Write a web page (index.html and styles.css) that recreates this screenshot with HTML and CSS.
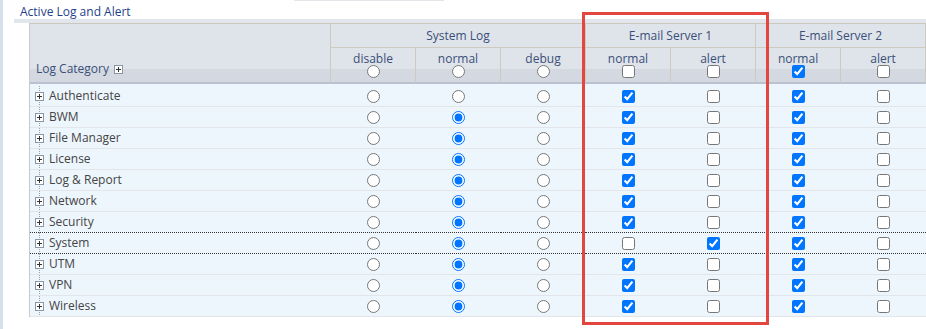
FILE: index.html
```html
<!DOCTYPE html>
<html lang="en">
<head>
    <meta charset="UTF-8">
    <meta name="viewport" content="width=device-width, initial-scale=1.0">
    <title>Active Log and Alert</title>
    <link rel="stylesheet" href="styles.css">
</head>
<body>

<div class="page">
    <div class="top-edge"></div>

    <div class="section">
        <div class="section-title">Active Log and Alert</div>

        <div class="section-body">
            <table class="log-table">
                <colgroup>
                    <col class="col-category">
                    <col span="7" class="col-option">
                </colgroup>
                <thead>
                    <tr class="group-row">
                        <th rowspan="2" class="category-head">
                            Log Category
                            <svg class="expander" width="9" height="9" viewBox="0 0 9 9"><rect x="0.5" y="0.5" width="8" height="8" fill="#fff" stroke="#8a96a4"/><path d="M2 4.5h5M4.5 2v5" stroke="#333"/></svg>
                        </th>
                        <th colspan="3">System Log</th>
                        <th colspan="2">E-mail Server 1</th>
                        <th colspan="2">E-mail Server 2</th>
                    </tr>
                    <tr class="option-row">
                        <th><div class="opt-label">disable</div><input type="radio" name="all"></th>
                        <th><div class="opt-label">normal</div><input type="radio" name="all"></th>
                        <th><div class="opt-label">debug</div><input type="radio" name="all"></th>
                        <th><div class="opt-label">normal</div><input type="checkbox"></th>
                        <th><div class="opt-label">alert</div><input type="checkbox"></th>
                        <th><div class="opt-label">normal</div><input type="checkbox" checked></th>
                        <th><div class="opt-label">alert</div><input type="checkbox"></th>
                    </tr>
                </thead>
                <tbody id="logRows"></tbody>
            </table>
        </div>
    </div>

    <div class="highlight"></div>
</div>

<script>
    // level: 0 none, 1 disable, 2 normal, 3 debug
    const categories = [
        { name: 'Authenticate', level: 0, mail: [1, 0, 1, 0] },
        { name: 'BWM', level: 2, mail: [1, 0, 1, 0] },
        { name: 'File Manager', level: 2, mail: [1, 0, 1, 0] },
        { name: 'License', level: 2, mail: [1, 0, 1, 0] },
        { name: 'Log & Report', level: 2, mail: [1, 0, 1, 0] },
        { name: 'Network', level: 2, mail: [1, 0, 1, 0] },
        { name: 'Security', level: 2, mail: [1, 0, 1, 0], sep: true },
        { name: 'System', level: 2, mail: [0, 1, 1, 0], sep: true },
        { name: 'UTM', level: 2, mail: [1, 0, 1, 0] },
        { name: 'VPN', level: 2, mail: [1, 0, 1, 0] },
        { name: 'Wireless', level: 2, mail: [1, 0, 1, 0] }
    ];

    const expander = '<svg class="expander" width="9" height="9" viewBox="0 0 9 9"><rect x="0.5" y="0.5" width="8" height="8" fill="#fff" stroke="#8a96a4"/><path d="M2 4.5h5M4.5 2v5" stroke="#333"/></svg>';
    const tbody = document.getElementById('logRows');

    categories.forEach((cat, i) => {
        const tr = document.createElement('tr');
        if (cat.sep) tr.className = 'dotted';

        let html = `<td class="category">${expander}${cat.name.replace('&', '&amp;')}</td>`;
        for (let l = 1; l <= 3; l++) {
            html += `<td><input type="radio" name="level${i}"${cat.level === l ? ' checked' : ''}></td>`;
        }
        cat.mail.forEach(on => {
            html += `<td><input type="checkbox"${on ? ' checked' : ''}></td>`;
        });
        tr.innerHTML = html;
        tbody.appendChild(tr);
    });
</script>

</body>
</html>
```

FILE: styles.css
```css
* {
    margin: 0;
    padding: 0;
    box-sizing: border-box;
}

body {
    font-family: 'Open Sans', 'Liberation Sans', sans-serif;
    font-size: 12px;
    color: #444;
    background: #fff;
}

.page {
    position: relative;
    min-height: 329px;
    border-left: 3px solid #d6e0ec;
    overflow: hidden;
}

.top-edge {
    width: 150px;
    height: 1px;
    margin-left: 291px;
    background-color: #e4e5ea;
}

.section {
    margin-left: 11px;
}

.section-title {
    padding: 4px 0 0 6px;
    height: 18px;
    line-height: 14px;
    color: #1f3f8c;
}

.section-body {
    border-top: 4px solid #e1e5ec;
    padding-left: 15px;
}

.log-table {
    table-layout: fixed;
    width: 897px;
    border-collapse: separate;
    border-spacing: 0;
    border-left: 1px solid #c9c9c9;
    border-top: 1px solid #cdc8bd;
}

.col-category {
    width: 301px;
}

.col-option {
    width: 85px;
}

.log-table th {
    font-weight: normal;
    color: #3a5079;
    text-align: center;
    border-right: 1px solid #cfcac0;
    background-color: #dfe3ea;
}

.group-row th {
    height: 24px;
    line-height: 23px;
    border-bottom: 1px solid #cfcac0;
}

.option-row th,
.category-head {
    height: 36px;
    padding: 5px 0 0;
    vertical-align: top;
    border-bottom: 2px solid #b9c2ce !important;
    background: linear-gradient(to bottom, #dfe3ea 21px, #d4d9e1 21px);
}

.category-head {
    height: 60px;
    text-align: left !important;
    vertical-align: bottom !important;
    padding: 0 0 2px 6px !important;
    line-height: 16px;
    background: linear-gradient(to bottom, #dfe3ea 45px, #d4d9e1 45px) !important;
}

.category-head .expander {
    margin-left: 2px;
    vertical-align: -1px;
}

.opt-label {
    line-height: 12px;
}

.option-row input {
    display: block;
    margin: 0 auto;
    width: 13px;
    height: 13px;
}

.log-table td {
    height: 21px;
    line-height: 20px;
    text-align: center;
    background-color: #eef6fd;
    border-bottom: 1px solid #e2e6ea;
}

tbody tr:first-child td {
    height: 23px;
    border-top: 2px solid #eef6fd;
}

.log-table tr.dotted td {
    border-bottom: 1px dotted #333;
}

.log-table td input {
    margin: 0;
    width: 13px;
    height: 13px;
    vertical-align: middle;
}

.log-table td.category {
    text-align: left;
    padding-left: 5px;
    color: #444;
    background: linear-gradient(#a0a0a0 50%, transparent 50%) 9px 0 / 1px 2px repeat-y, #eef6fd;
}

.category .expander {
    margin-right: 5px;
    vertical-align: -1px;
}

.highlight {
    position: absolute;
    left: 579px;
    top: 12px;
    width: 187px;
    height: 313px;
    border: 3px solid #e2463e;
}
```
